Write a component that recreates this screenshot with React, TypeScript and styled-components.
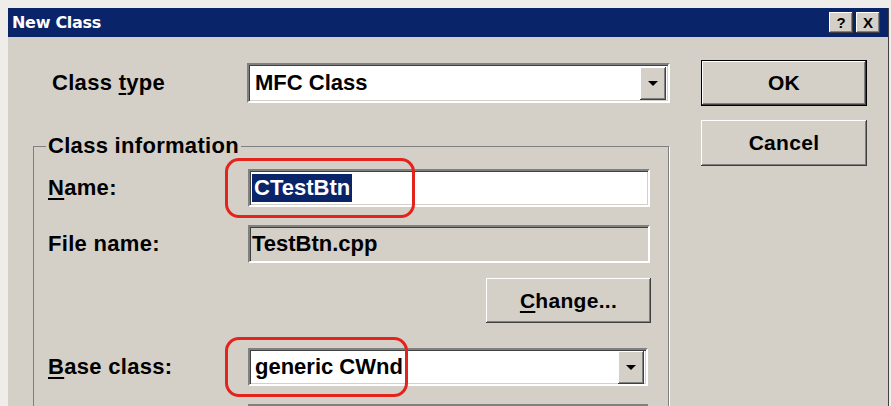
import styled, { createGlobalStyle } from 'styled-components';

const Global = createGlobalStyle`
  html, body {
    margin: 0;
    padding: 0;
    background: #d4d0c8;
  }
  body {
    font-family: 'Liberation Sans', Arial, sans-serif;
  }
`;

const Screen = styled.div`
  position: relative;
  width: 891px;
  height: 406px;
  overflow: hidden;
  box-sizing: border-box;
  padding: 8px 2px 0 8px;
  background: #eeede9;
`;

const Frame = styled.div`
  height: 100%;
  display: flex;
  flex-direction: column;
  box-sizing: border-box;
  border-right: 1px solid #404040;
  background: #d4d0c8;
`;

const TitleBar = styled.div`
  height: 29px;
  flex: none;
  display: flex;
  align-items: center;
  padding: 0 8px 0 4px;
  background: #0a246a;
`;

const TitleText = styled.div`
  flex: 1;
  color: #fff;
  font-family: 'DejaVu Sans', Verdana, sans-serif;
  font-weight: bold;
  font-size: 16px;
  letter-spacing: -0.3px;
`;

const CaptionBtn = styled.div<{ $gap?: number }>`
  width: 24px;
  height: 21px;
  margin-left: ${(p) => p.$gap ?? 0}px;
  display: flex;
  align-items: center;
  justify-content: center;
  box-sizing: border-box;
  background: #d4d0c8;
  box-shadow: inset -1px -1px #404040, inset 1px 1px #fff, inset -2px -2px #808080;
  font-weight: bold;
  font-size: 15px;
  color: #000;
`;

const Body = styled.div`
  flex: 1;
  display: flex;
  align-items: flex-start;
`;

const LeftCol = styled.div`
  width: 637px;
  padding-left: 25px;
  padding-top: 26px;
`;

const TypeRow = styled.div`
  display: grid;
  grid-template-columns: 195px 423px;
  align-items: center;
  padding-left: 19px;
`;

const Label = styled.div`
  font-weight: bold;
  font-size: 22px;
  color: #000;
  letter-spacing: 0.3px;
  white-space: nowrap;
`;

const Combo = styled.div<{ $w: number; $h: number; $pad: number }>`
  width: ${(p) => p.$w}px;
  height: ${(p) => p.$h}px;
  box-sizing: border-box;
  display: flex;
  align-items: center;
  padding: 0 2px 0 ${(p) => p.$pad}px;
  background: #fff;
  border: 2px solid;
  border-color: #808080 #fff #fff #808080;
  box-shadow: inset 1px 1px #404040, inset -1px -1px #d4d0c8;
`;

const ComboText = styled.div`
  flex: 1;
  font-weight: bold;
  font-size: 22px;
  color: #000;
`;

const DropBtn = styled.div`
  width: 26px;
  height: 33px;
  display: flex;
  align-items: center;
  justify-content: center;
  background: #d4d0c8;
  box-shadow: inset -1px -1px #404040, inset 1px 1px #fff, inset -2px -2px #808080;
  &::after {
    content: '';
    border-left: 5px solid transparent;
    border-right: 5px solid transparent;
    border-top: 5px solid #000;
  }
`;

const Group = styled.fieldset`
  margin: 32px 0 0 0;
  padding: 0 17px 0 14px;
  width: 636px;
  height: 300px;
  box-sizing: border-box;
  border: 1px solid #808080;
  box-shadow: 1px 1px 0 #fff;
  min-inline-size: 0;
`;

const Legend = styled.legend`
  margin-left: -2px;
  padding: 0 2px;
  line-height: 22px;
  font-weight: bold;
  font-size: 22px;
  letter-spacing: 0.3px;
  color: #000;
`;

const FieldRow = styled.div<{ $top: number }>`
  display: grid;
  grid-template-columns: 200px 1fr;
  align-items: center;
  margin-top: ${(p) => p.$top}px;
`;

const Edit = styled.div<{ $readonly?: boolean }>`
  width: 402px;
  height: 38px;
  box-sizing: border-box;
  display: flex;
  align-items: center;
  padding-left: 2px;
  background: ${(p) => (p.$readonly ? '#d4d0c8' : '#fff')};
  border: 2px solid;
  border-color: #808080 #fff #fff #808080;
  box-shadow: inset 1px 1px #404040, inset -1px -1px #d4d0c8;
  font-weight: bold;
  font-size: 22px;
  color: #000;
`;

const Selected = styled.span`
  background: #0a246a;
  color: #fff;
  padding: 0 2px;
  line-height: 28px;
`;

const ButtonRow = styled.div<{ $top: number }>`
  display: flex;
  justify-content: flex-end;
  width: 603px;
  margin-top: ${(p) => p.$top}px;
`;

const Button = styled.div<{ $w: number; $h: number; $default?: boolean }>`
  width: ${(p) => p.$w}px;
  height: ${(p) => p.$h}px;
  box-sizing: border-box;
  display: flex;
  align-items: center;
  justify-content: center;
  background: #d4d0c8;
  border: ${(p) => (p.$default ? '1px solid #000' : 'none')};
  box-shadow: inset -1px -1px #404040, inset 1px 1px #fff, inset -2px -2px #808080;
  font-weight: bold;
  font-size: 21px;
  color: #000;
  letter-spacing: 0.3px;
`;

const RightCol = styled.div`
  display: flex;
  flex-direction: column;
  gap: 14px;
  margin-left: 31px;
  padding-top: 23px;
`;

const Ul = styled.span`
  text-decoration: underline;
  text-underline-offset: 3px;
`;

const PartialBox = styled.div`
  width: 400px;
  height: 20px;
  margin-left: 200px;
  margin-top: 18px;
  box-sizing: border-box;
  border-top: 2px solid #808080;
  border-left: 2px solid #808080;
  box-shadow: inset 1px 1px #404040;
  background: #fff;
`;

const Highlight = styled.div<{ $x: number; $y: number; $w: number; $h: number }>`
  position: absolute;
  left: ${(p) => p.$x}px;
  top: ${(p) => p.$y}px;
  width: ${(p) => p.$w}px;
  height: ${(p) => p.$h}px;
  box-sizing: border-box;
  border: 3px solid #e3231c;
  border-radius: 14px;
  pointer-events: none;
`;

export default function App() {
  return (
    <>
      <Global />
      <Screen>
        <Frame>
          <TitleBar>
            <TitleText>New Class</TitleText>
            <CaptionBtn>?</CaptionBtn>
            <CaptionBtn $gap={3}>X</CaptionBtn>
          </TitleBar>
          <Body>
            <LeftCol>
              <TypeRow>
                <Label>
                  Class <Ul>t</Ul>ype
                </Label>
                <Combo $w={423} $h={40} $pad={6}>
                  <ComboText>MFC Class</ComboText>
                  <DropBtn />
                </Combo>
              </TypeRow>

              <Group>
                <Legend>Class information</Legend>
                <FieldRow $top={12}>
                  <Label>
                    <Ul>N</Ul>ame:
                  </Label>
                  <Edit>
                    <Selected>CTestBtn</Selected>
                  </Edit>
                </FieldRow>
                <FieldRow $top={18}>
                  <Label>File name:</Label>
                  <Edit $readonly>TestBtn.cpp</Edit>
                </FieldRow>
                <ButtonRow $top={15}>
                  <Button $w={165} $h={45}>
                    <span>
                      <Ul>C</Ul>hange...
                    </span>
                  </Button>
                </ButtonRow>
                <FieldRow $top={25}>
                  <Label>
                    <Ul>B</Ul>ase class:
                  </Label>
                  <Combo $w={400} $h={38} $pad={5}>
                    <ComboText>generic CWnd</ComboText>
                    <DropBtn />
                  </Combo>
                </FieldRow>
                <PartialBox />
              </Group>
            </LeftCol>

            <RightCol>
              <Button $w={166} $h={46} $default>
                OK
              </Button>
              <Button $w={166} $h={46}>
                Cancel
              </Button>
            </RightCol>
          </Body>
        </Frame>
        <Highlight $x={225} $y={158} $w={190} $h={60} />
        <Highlight $x={225} $y={337} $w={183} $h={60} />
      </Screen>
    </>
  );
}
